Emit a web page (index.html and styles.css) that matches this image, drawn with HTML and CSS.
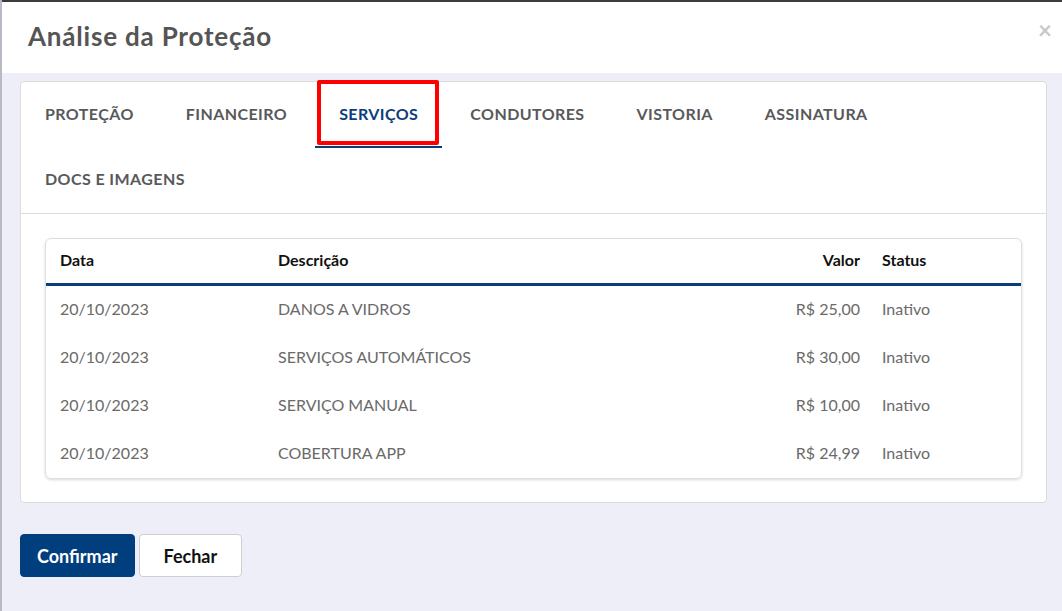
FILE: index.html
```html
<!DOCTYPE html>
<html lang="pt-BR">
<head>
    <meta charset="UTF-8">
    <meta name="viewport" content="width=device-width, initial-scale=1.0">
    <title>Análise da Proteção</title>
    <link rel="stylesheet" href="styles.css">
</head>
<body>
<div class="modal">
    <div class="modal-header">
        <h1>Análise da Proteção</h1>
        <span class="close">&times;</span>
    </div>
    <div class="modal-body">
        <div class="panel">
            <ul class="tabs">
                <li>Proteção</li>
                <li>Financeiro</li>
                <li class="active"><span class="mark">Serviços</span></li>
                <li>Condutores</li>
                <li>Vistoria</li>
                <li>Assinatura</li>
                <li>Docs e Imagens</li>
            </ul>
            <div class="panel-content">
                <div class="table-card">
                    <div class="row head">
                        <div>Data</div>
                        <div>Descrição</div>
                        <div class="right">Valor</div>
                        <div>Status</div>
                    </div>
                    <div class="row">
                        <div>20/10/2023</div>
                        <div>DANOS A VIDROS</div>
                        <div class="right">R$ 25,00</div>
                        <div>Inativo</div>
                    </div>
                    <div class="row">
                        <div>20/10/2023</div>
                        <div>SERVIÇOS AUTOMÁTICOS</div>
                        <div class="right">R$ 30,00</div>
                        <div>Inativo</div>
                    </div>
                    <div class="row">
                        <div>20/10/2023</div>
                        <div>SERVIÇO MANUAL</div>
                        <div class="right">R$ 10,00</div>
                        <div>Inativo</div>
                    </div>
                    <div class="row">
                        <div>20/10/2023</div>
                        <div>COBERTURA APP</div>
                        <div class="right">R$ 24,99</div>
                        <div>Inativo</div>
                    </div>
                </div>
            </div>
        </div>
        <div class="actions">
            <button class="btn primary">Confirmar</button>
            <button class="btn">Fechar</button>
        </div>
    </div>
</div>
</body>
</html>
```

FILE: styles.css
```css
body {
    margin: 0;
    padding: 0;
    font-family: Lato, "Open Sans", sans-serif;
    background-color: #b9b9c4;
    overflow: hidden;
}
.modal {
    margin-left: 2px;
    border-top: 2px solid #3c3c3c;
    height: 609px;
    background-color: #eeeef8;
}
.modal-header {
    height: 71px;
    background-color: #fff;
    display: flex;
    align-items: center;
    justify-content: space-between;
    padding: 0 10px 0 26px;
}
.modal-header h1 {
    margin: 0 0 3px 0;
    font-size: 26px;
    font-weight: bold;
    letter-spacing: 0.8px;
    color: #555;
}
.close {
    font-size: 24px;
    font-weight: bold;
    color: #c8c8c8;
    margin-top: -16px;
}
.modal-body {
    padding: 8px 15px 0 18px;
}
.panel {
    background-color: #fff;
    border: 1px solid #dcdcdc;
    border-radius: 4px;
}
.tabs {
    list-style: none;
    margin: 0;
    padding: 0;
    display: flex;
    flex-wrap: wrap;
    gap: 0 4px;
    border-bottom: 1px solid #dcdcdc;
}
.tabs li {
    height: 66px;
    display: flex;
    align-items: center;
    padding: 0 24px 4px 24px;
    font-size: 16px;
    font-weight: bold;
    text-transform: uppercase;
    letter-spacing: 0.42px;
    color: #58595b;
    box-sizing: border-box;
}
.tabs li:nth-child(n+7) {
    height: 65px;
}
.tabs li.active {
    color: #0b3d7a;
    border-bottom: 2px solid #0b3d7a;
    padding-bottom: 2px;
    position: relative;
}
/* destaque em vermelho em volta da aba selecionada */
.tabs li.active .mark::before {
    content: "";
    position: absolute;
    left: 2px;
    right: 3px;
    top: -2px;
    bottom: 1px;
    border: 4px solid #f00;
    border-radius: 2px;
}
.panel-content {
    padding: 24px 24px 23px 24px;
}
.table-card {
    border: 1px solid #dedede;
    border-radius: 6px;
    box-shadow: 0 1px 3px rgba(0, 0, 0, 0.15);
}
.row {
    display: grid;
    grid-template-columns: 218px 1fr 164px 153px;
    height: 48px;
    align-items: center;
    font-size: 16px;
    color: #6a6a6a;
}
.row div {
    padding: 0 10px 3px 14px;
}
.row .right {
    text-align: right;
    padding-right: 8px;
}
.row.head {
    height: 44px;
    color: #111;
    font-weight: bold;
    border-bottom: 3px solid #0b3d7a;
}
.actions {
    margin-top: 31px;
    display: flex;
    gap: 4px;
}
.btn {
    font-family: inherit;
    font-size: 18px;
    font-weight: bold;
    height: 43px;
    padding: 0 24px;
    border: 1px solid #cfcfcf;
    border-radius: 4px;
    background-color: #fff;
    color: #111;
    cursor: pointer;
}
.btn.primary {
    padding: 0 16px;
    background-color: #003e7e;
    border-color: #003e7e;
    color: #fff;
}
```
